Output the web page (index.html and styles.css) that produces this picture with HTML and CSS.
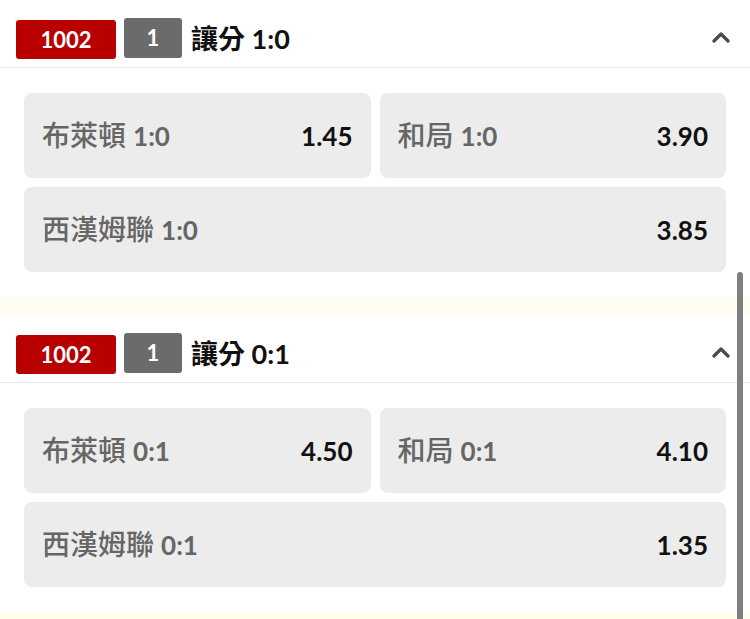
FILE: index.html
```html
<!DOCTYPE html>
<html lang="zh-Hant">
<head>
  <meta charset="UTF-8" />
  <meta name="viewport" content="width=device-width, initial-scale=1.0"/>
  <title>讓分</title>
  <link rel="stylesheet" href="styles.css">
</head>
<body>

<!-- 讓分 1:0 -->
<div class="market">
  <div class="market-head">
    <span class="badge badge-match">1002</span>
    <span class="badge badge-no">1</span>
    <span class="market-title">讓分 1:0</span>
    <svg class="chevron" width="18" height="12" viewBox="0 0 18 12">
      <path d="M2 10 L9 3 L16 10" fill="none" stroke="#4a4a4a" stroke-width="3.2" stroke-linecap="round" stroke-linejoin="round"/>
    </svg>
  </div>
  <div class="odds">
    <div class="odd"><span class="odd-name">布萊頓 <span class="line">1:0</span></span><span class="odd-value">1.45</span></div>
    <div class="odd"><span class="odd-name">和局 <span class="line">1:0</span></span><span class="odd-value">3.90</span></div>
    <div class="odd wide"><span class="odd-name">西漢姆聯 <span class="line">1:0</span></span><span class="odd-value">3.85</span></div>
  </div>
</div>

<!-- 讓分 0:1 -->
<div class="market">
  <div class="market-head">
    <span class="badge badge-match">1002</span>
    <span class="badge badge-no">1</span>
    <span class="market-title">讓分 0:1</span>
    <svg class="chevron" width="18" height="12" viewBox="0 0 18 12">
      <path d="M2 10 L9 3 L16 10" fill="none" stroke="#4a4a4a" stroke-width="3.2" stroke-linecap="round" stroke-linejoin="round"/>
    </svg>
  </div>
  <div class="odds">
    <div class="odd"><span class="odd-name">布萊頓 <span class="line">0:1</span></span><span class="odd-value">4.50</span></div>
    <div class="odd"><span class="odd-name">和局 <span class="line">0:1</span></span><span class="odd-value">4.10</span></div>
    <div class="odd wide"><span class="odd-name">西漢姆聯 <span class="line">0:1</span></span><span class="odd-value">1.35</span></div>
  </div>
</div>

<div class="scrollbar"></div>

</body>
</html>
```

FILE: styles.css
```css
body {
  margin: 0;
  font-family: "Lato", "Noto Sans CJK TC", sans-serif;
  background: #fffcf0;
  overflow: hidden;
}
.market {
  background: white;
  margin-bottom: 18px;
}
.market-head {
  height: 68px;
  box-sizing: border-box;
  padding: 8px 20px 0 16px;
  display: flex;
  align-items: center;
  border-bottom: 1px solid #ececec;
}
.badge {
  display: flex;
  align-items: center;
  justify-content: center;
  color: white;
  font-size: 22px;
  font-weight: bold;
  border-radius: 3px;
}
.badge-match {
  width: 100px;
  height: 39px;
  background: #b80000;
  margin-right: 8px;
  margin-top: 3px;
}
.badge-no {
  width: 58px;
  height: 40px;
  background: #6b6b6b;
  margin-right: 9px;
}
.market-title {
  font-size: 27px;
  font-weight: bold;
  color: #111;
}
.chevron {
  margin-left: auto;
  margin-bottom: 2px;
}
.odds {
  padding: 25px 24px;
  display: grid;
  grid-template-columns: 1fr 1fr;
  gap: 9px;
}
.odd {
  height: 85px;
  box-sizing: border-box;
  padding: 0 18px;
  background: #ececec;
  border-radius: 8px;
  display: flex;
  align-items: center;
  justify-content: space-between;
  font-size: 26px;
  line-height: 1;
}
.odd.wide {
  grid-column: 1 / 3;
}
.odd-name {
  color: #666;
  font-size: 28px;
  font-weight: 500;
  margin-top: -1px;
}
.line {
  font-size: 26px;
  font-weight: bold;
}
.odd-value {
  color: #111;
  font-weight: bold;
}
.scrollbar {
  position: fixed;
  right: 7px;
  top: 272px;
  bottom: 0;
  width: 6px;
  background: #7f7f7f;
  border-radius: 3px 3px 0 0;
}
```
